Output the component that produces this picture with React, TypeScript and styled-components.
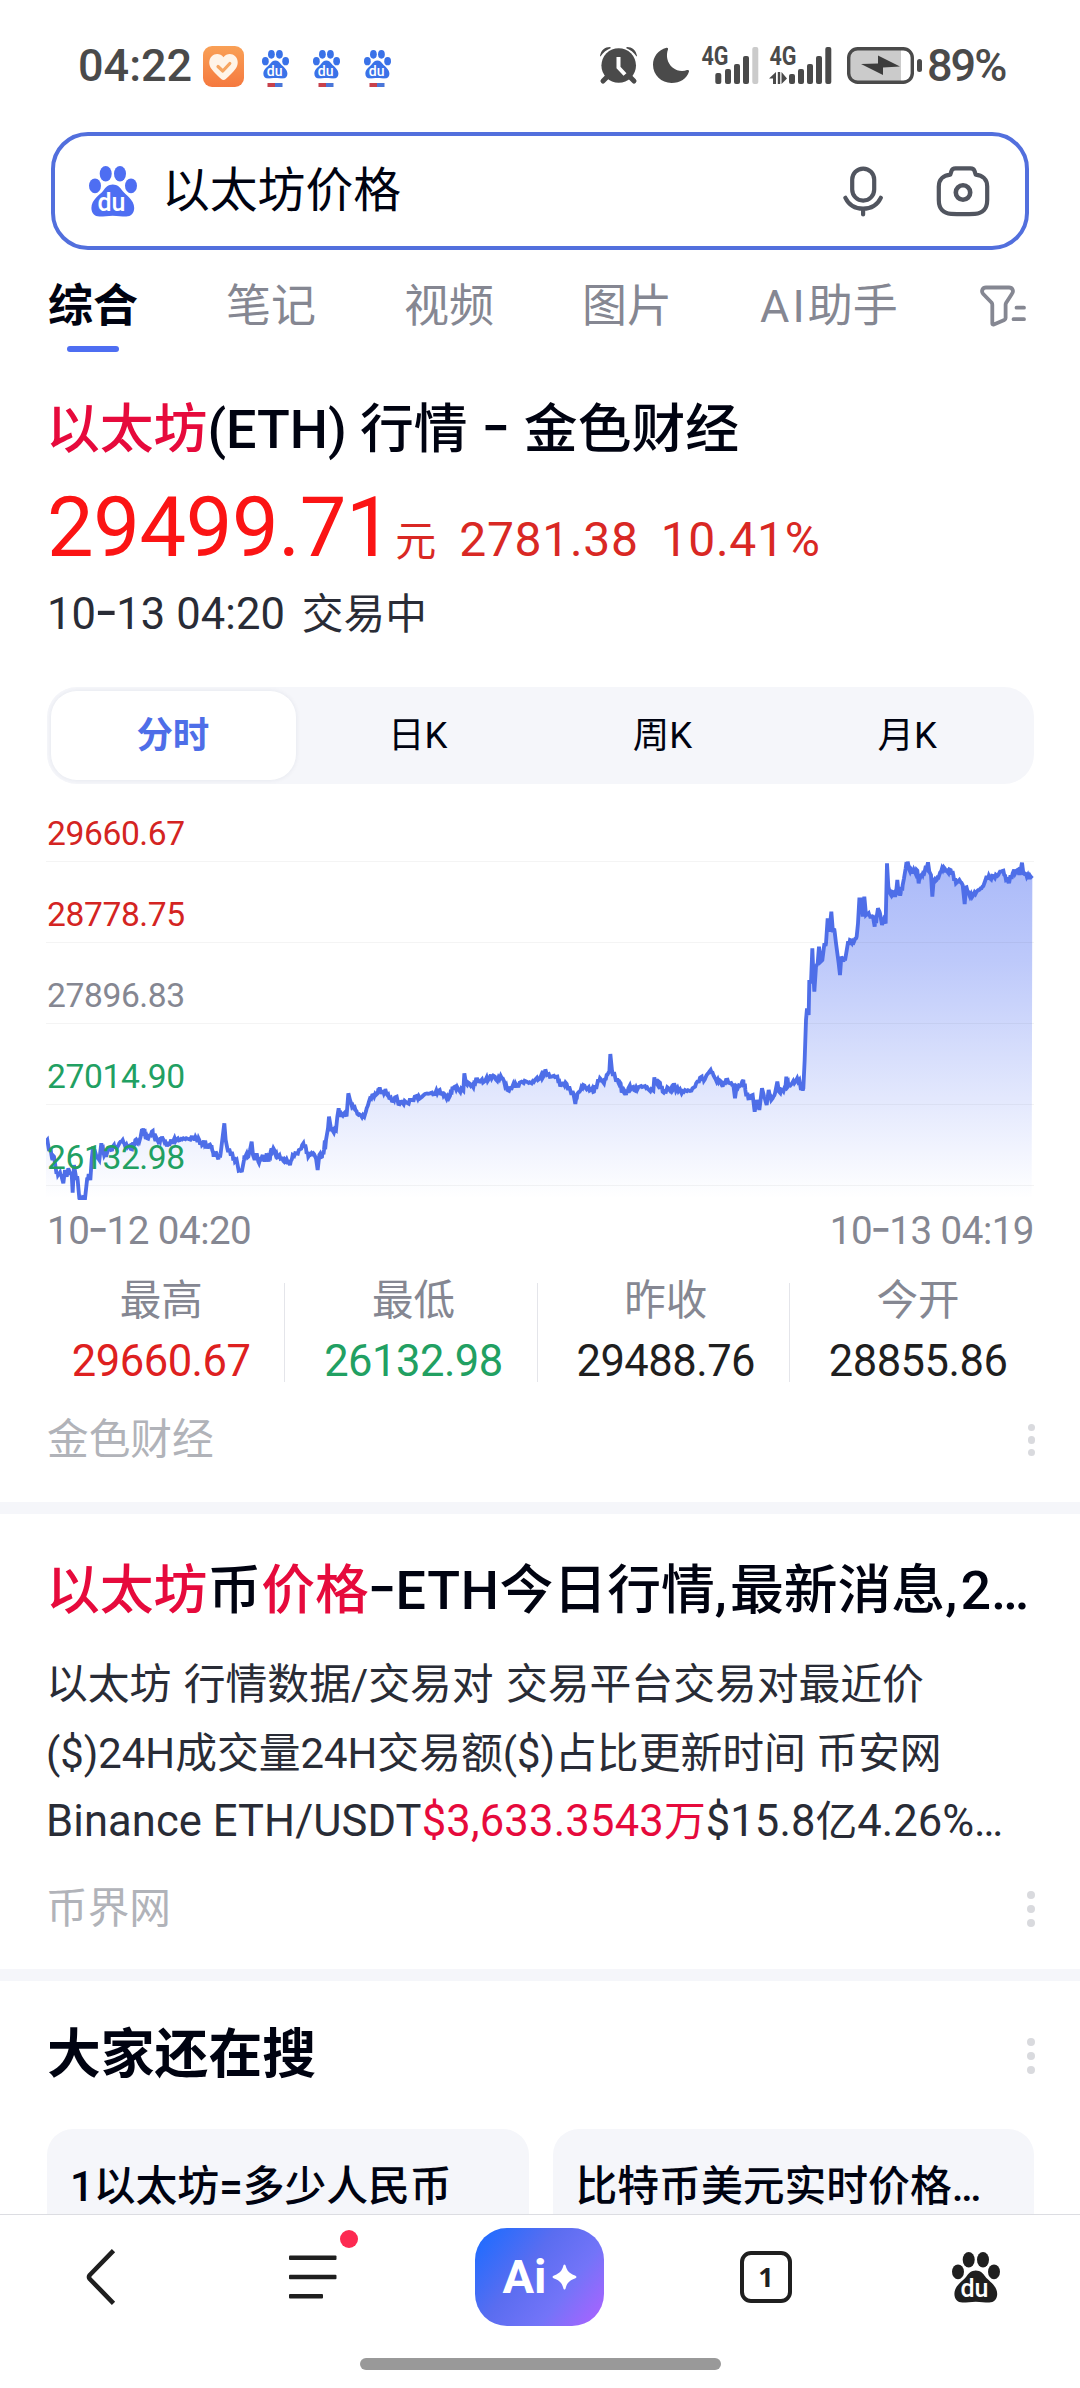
import React from "react";
import styled, { createGlobalStyle, css } from "styled-components";

const GlobalStyle = createGlobalStyle`
  * { box-sizing: border-box; }
  html, body { margin: 0; padding: 0; background: #fff; }
  body {
    font-family: Roboto, "Noto Sans CJK SC", sans-serif;
    color: #000311;
    -webkit-font-smoothing: antialiased;
  }
  svg { display: block; flex: none; }
`;

const Page = styled.div`
  width: 1080px;
  height: 2388px;
  display: flex;
  flex-direction: column;
  background: #fff;
  overflow: hidden;
`;

const Scroll = styled.main`
  flex: 1;
  min-height: 0;
  overflow: hidden;
`;

/* ---------- shared text ---------- */

const Dash = styled.span<{ $gap?: number }>`
  font-family: Inter, sans-serif;
  font-size: 1.2em;
  line-height: 0;
  font-weight: 400;
  margin: 0 calc(-0.038em + ${(p) => p.$gap ?? 0}px);
`;

const Latin = styled.span<{ $track?: number; $size?: number }>`
  letter-spacing: ${(p) => p.$track ?? 0}px;
  ${(p) => p.$size && css`font-size: ${p.$size}px;`}
`;

const Hit = styled.em`
  font-style: normal;
  color: #e60a3c;
`;

/* ---------- status bar ---------- */

const StatusBar = styled.header`
  height: 132px;
  padding: 0 75px 0 78px;
  display: flex;
  align-items: center;
  justify-content: space-between;
  color: #4a4a4a;
`;

const StatusGroup = styled.div`
  display: flex;
  align-items: center;
`;

const Clock = styled.span`
  width: 125px;
  font-size: 45px;
  line-height: 60px;
  font-weight: 500;
`;

const PawRow = styled.div`
  display: flex;
  gap: 24px;
  margin-left: 18px;
  padding-top: 5px;
`;

const Percent = styled.span`
  width: 78px;
  font-size: 45px;
  line-height: 60px;
  font-weight: 500;
  letter-spacing: -2px;
  white-space: nowrap;
`;

/* ---------- search ---------- */

const SearchBox = styled.div`
  height: 118px;
  margin: 0 51px;
  padding: 0 35px 0 34px;
  border: 4px solid #526fdd;
  border-radius: 37px;
  display: flex;
  align-items: center;
`;

const Query = styled.span`
  flex: 1;
  margin-left: 25px;
  font-size: 47.8px;
  line-height: 60px;
`;

const SearchTools = styled.div`
  display: flex;
  align-items: center;
  gap: 53px;
`;

const Tabs = styled.nav`
  height: 118px;
  padding: 0 51px 0 48px;
  display: flex;
  align-items: flex-start;
  gap: 88px;
`;

const Tab = styled.span<{ $active?: boolean }>`
  display: flex;
  flex-direction: column;
  align-items: center;
  padding-top: 29px;
  font-size: 45px;
  line-height: 56px;
  white-space: nowrap;
  color: ${(p) => (p.$active ? "#000311" : "#858792")};
  font-weight: ${(p) => (p.$active ? 700 : 400)};
  &::after {
    content: "";
    width: 52px;
    height: 6px;
    margin-top: 11px;
    border-radius: 3px;
    background: ${(p) => (p.$active ? "#4e6ef2" : "transparent")};
  }
`;

const FilterSlot = styled.div`
  margin-left: -6px;
  padding-top: 35px;
`;

/* ---------- market card ---------- */

const Market = styled.section`
  height: 1134px;
  padding: 0 46px 0 47px;
`;

const Title = styled.h2<{ $height: number; $bold?: boolean }>`
  margin: 0;
  height: ${(p) => p.$height}px;
  font-size: 53.8px;
  line-height: 76px;
  font-weight: ${(p) => (p.$bold ? 600 : 500)};
  white-space: nowrap;
`;

const MarketTitle = styled(Title)`
  padding-top: 24px;
  margin-left: -1px;
`;

const PriceLine = styled.div`
  height: 110px;
  padding-top: 3px;
  display: flex;
  align-items: baseline;
  color: #d92824;
  font-size: 48px;
  line-height: 100px;
`;

const Price = styled.span`
  color: #fb1414;
  font-size: 83px;
  letter-spacing: -0.4px;
`;

const Unit = styled.span`
  font-size: 41px;
  margin: 0 23px 0 3px;
`;

const Change = styled.span`
  margin-right: 22px;
  letter-spacing: 0.7px;
`;

const Stamp = styled.div`
  height: 102px;
  font-size: 41.7px;
  line-height: 60px;
  color: #292c36;
  white-space: pre;
`;

const StampTime = styled(Latin)`
  margin-right: -4px;
`;

const Segments = styled.div`
  height: 97px;
  padding: 4px;
  border-radius: 30px;
  background: #f5f6fa;
  display: grid;
  grid-template-columns: repeat(4, 1fr);
`;

const Segment = styled.div<{ $active?: boolean }>`
  display: flex;
  align-items: center;
  justify-content: center;
  padding: 0 1px 7px 0;
  font-size: 36.5px;
  border-radius: 26px;
  ${(p) =>
    p.$active &&
    css`
      background: #fff;
      color: #4e6ee8;
      font-weight: 700;
      box-shadow: 0 0 5px rgba(30, 40, 80, 0.08);
    `}
`;

const ChartStack = styled.div`
  height: 416px;
  margin-left: -1px;
  display: grid;
  > * { grid-area: 1 / 1; }
`;

const ChartSvg = styled.svg`
  margin-top: 16px;
`;

const Scale = styled.div`
  display: flex;
  flex-direction: column;
  padding-top: 15px;
`;

const ScaleRow = styled.div<{ $tone: string }>`
  height: 81px;
  &:first-child { height: 63px; }
  display: flex;
  align-items: flex-end;
  padding: 0 0 7px 1px;
  border-bottom: 1px solid rgba(30, 30, 40, 0.05);
  font-size: 33.6px;
  line-height: 40px;
  letter-spacing: -0.4px;
  color: ${(p) => p.$tone};
`;

const Times = styled.div`
  height: 83px;
  padding-top: 10px;
  display: flex;
  justify-content: space-between;
  font-size: 38.5px;
  line-height: 42px;
  letter-spacing: -0.5px;
  color: #858792;
`;

const Stats = styled.div`
  height: 99px;
  margin: 0 -10px 0 -14px;
  display: grid;
  grid-template-columns: repeat(4, 252.3px);
`;

const Stat = styled.div<{ $tone?: string }>`
  display: flex;
  flex-direction: column;
  align-items: center;
  padding-left: 5px;
  border-right: 1px solid #e4e5ea;
  font-size: 43.5px;
  line-height: 44px;
  letter-spacing: -0.5px;
  color: ${(p) => p.$tone ?? "#1f1f1f"};
  &:last-child { border-right-color: transparent; }
`;

const StatName = styled.span`
  font-size: 41.5px;
  line-height: 36px;
  margin-bottom: 21px;
  letter-spacing: 0;
  color: #858792;
`;

const StatValue = styled.span`
  height: 42px;
`;

const Source = styled.div<{ $top: number }>`
  margin-top: ${(p) => p.$top}px;
  height: 60px;
  display: flex;
  align-items: center;
  justify-content: space-between;
  font-size: 41.7px;
  line-height: 60px;
  color: #b1b3b9;
`;

const Dots = styled.span<{ $size: number; $gap: number }>`
  display: flex;
  flex-direction: column;
  gap: ${(p) => p.$gap}px;
  margin-right: -1px;
  i {
    width: ${(p) => p.$size}px;
    height: ${(p) => p.$size}px;
    border-radius: 50%;
    background: #d9dade;
  }
`;

const Band = styled.div`
  height: 12px;
  background: #f5f6fa;
`;

/* ---------- second result ---------- */

const Result = styled.section`
  height: 455px;
  padding: 39px 46px 0 46px;
`;

const Abstract = styled.p`
  margin: 22px 0 0;
  font-size: 41.8px;
  line-height: 68.7px;
  color: #292c36;
  white-space: nowrap;
`;

const Line = styled.span<{ $space?: number }>`
  display: block;
  height: 68.7px;
  word-spacing: ${(p) => p.$space ?? 0}px;
`;

/* ---------- related searches ---------- */

const Related = styled.section`
  padding: 36px 46px 0 47px;
`;

const RelatedHead = styled.div`
  height: 112px;
  display: flex;
  justify-content: space-between;
`;

const DotsSlot = styled.div`
  padding-top: 21px;
`;

const Cards = styled.div`
  display: grid;
  grid-template-columns: 1fr 1fr;
  gap: 24px;
`;

const Card = styled.div`
  height: 130px;
  padding: 28px 24px 0 23px;
  border-radius: 26px;
  background: #f5f6fa;
  font-size: 41.8px;
  line-height: 60px;
  font-weight: 500;
  white-space: nowrap;
`;

/* ---------- bottom bar ---------- */

const BottomBar = styled.footer`
  height: 174px;
  border-top: 1px solid #dcdde2;
  display: flex;
  flex-direction: column;
  align-items: center;
`;

const NavRow = styled.div`
  height: 143px;
  width: 100%;
  padding-bottom: 19px;
  display: grid;
  grid-template-columns: 202px 222px 231px 222px 197px;
  align-items: center;
  justify-items: center;
`;

const MenuButton = styled.div`
  position: relative;
`;

const Badge = styled.i`
  position: absolute;
  left: 51px;
  top: -25px;
  width: 18px;
  height: 18px;
  border-radius: 50%;
  background: #fd2a51;
`;

const AiButton = styled.div`
  width: 129px;
  height: 98px;
  border-radius: 32px;
  background: linear-gradient(128deg, #1f6cff 5%, #5a6df0 40%, #7374f8 68%, #a863ff 96%);
  display: flex;
  align-items: center;
  justify-content: center;
  gap: 5px;
  color: #fff;
  font-size: 47px;
  line-height: 60px;
  font-weight: 700;
`;

const TabCount = styled.div`
  width: 52px;
  height: 52px;
  border: 4.5px solid #1f1f1f;
  border-radius: 11px;
  display: flex;
  align-items: center;
  justify-content: center;
  font-family: "Noto Sans", sans-serif;
  font-size: 27px;
  font-weight: 700;
  line-height: 40px;
  color: #1f1f1f;
`;

const HomeBar = styled.div`
  width: 361px;
  height: 12px;
  border-radius: 6px;
  background: #999;
`;

/* ---------- icons ---------- */

function Paw({ color, width = 48 }: { color: string; width?: number }) {
  return (
    <svg width={width} height={(width * 51) / 48} viewBox="0 0 48 51" fill={color}>
      <ellipse cx="16.7" cy="7.7" rx="6" ry="7.7" />
      <ellipse cx="31" cy="7.7" rx="6" ry="7.7" />
      <ellipse cx="6" cy="19.8" rx="6" ry="7.4" />
      <ellipse cx="42" cy="19.8" rx="6" ry="7.4" />
      <path d="M23.8 18.5c4.6 0 7.2 2.8 9.6 6.2 3 4.2 11.8 8.6 11.8 17.4 0 5.200-3.400 8.500-8 8.500-5 0-8-.9-13.400-.9s-8.400.9-13.400.9c-4.600 0-8-3.300-8-8.500 0-8.800 8.400-13 11.800-17.400 2.400-3.400 5-6.200 9.600-6.200z" />
      <text x="22.500" y="45.400" textAnchor="middle" fontFamily="Roboto, sans-serif" fontWeight="500" fontSize="25" fill="#fff">
        du
      </text>
    </svg>
  );
}

function StatusPaw() {
  return (
    <svg width="27" height="37" viewBox="0 0 27 37">
      <Paw color="#3a72e8" width={27} />
      <rect x="5.500" y="33" width="7.500" height="4" fill="#c8414b" />
      <rect x="13" y="33" width="7.500" height="4" fill="#4a76d8" />
    </svg>
  );
}

const HeartIcon = () => (
  <svg width="41" height="41" viewBox="0 0 41 41">
    <defs>
      <linearGradient id="heartBg" x1="0" y1="0" x2="0" y2="1">
        <stop offset="0" stopColor="#f9a056" />
        <stop offset="1" stopColor="#f5793f" />
      </linearGradient>
    </defs>
    <rect width="41" height="41" rx="9" fill="url(#heartBg)" />
    <path d="M20.500 11.200C17.500 7.200 12 7 8.800 10.200c-3.300 3.400-3.400 8.600-.2 12.800 2.700 3.500 6.400 7.400 9.600 10.100 1.600 1.300 3 1.300 4.600 0 3.200-2.700 6.900-6.600 9.600-10.100 3.200-4.200 3.100-9.400-.2-12.800C29 7 23.500 7.200 20.500 11.200z" fill="#fff4e8" />
    <path d="M15 20.500l4.800 4.500 7-7.500" fill="none" stroke="#f6a561" strokeWidth="3.200" strokeLinecap="round" strokeLinejoin="round" />
  </svg>
);

const StatusIcons = () => (
  <svg width="328" height="60" viewBox="600 35 328 60" fill="#4a4a4a">
    <path d="M604 80l6-6M635 80l-6-6" stroke="#4a4a4a" strokeWidth="5" strokeLinecap="round" />
    <path d="M601 55c1-6 5-9 10-9l1 1c-4 1.500-8 4.500-10.500 8.500zM638 55c-1-6-5-9-10-9l-1 1c4 1.500 8 4.500 10.500 8.500z" />
    <circle cx="619.700" cy="64.500" r="17.300" />
    <path d="M619.500 56v10.500l6.500 7" fill="none" stroke="#fff" strokeWidth="4" />
    <path d="M667.500 46.800c-8.400 2.200-13.500 9-13.500 17C654 74 662.500 82 672.500 82c8.500 0 15.500-4.500 17.500-11.500.2-1.200-.8-1.900-2-1.400-4 1.600-10 1.300-14.500-2.600-5.300-4.600-6.800-11.800-4.500-18 .4-1.200-.4-2-1.500-1.700z" />
    <text x="702.500" y="64" fontFamily="Roboto, sans-serif" fontSize="25" fontWeight="700" textLength="27" lengthAdjust="spacingAndGlyphs">4G</text>
    <rect x="716.300" y="72" width="6" height="11" rx="2" />
    <rect x="726" y="68" width="6" height="15" rx="2" />
    <rect x="735" y="63" width="6" height="20" rx="2" />
    <rect x="744" y="55" width="6" height="28" rx="2" />
    <rect x="753.300" y="46" width="6" height="37" rx="2" fill="#cbcbcb" />
    <text x="770.500" y="64" fontFamily="Roboto, sans-serif" fontSize="25" fontWeight="700" textLength="27" lengthAdjust="spacingAndGlyphs">4G</text>
    <path d="M777 71v12h-3v-5.500H770l7-6.500zM778.800 71h2.400v12h-2.400zM782.500 71l5.500 6.500-5.500 5.500z" />
    <rect x="790" y="73" width="6" height="10" rx="2" />
    <rect x="799" y="68" width="6" height="15" rx="2" />
    <rect x="808" y="63" width="6" height="20" rx="2" />
    <rect x="817" y="55" width="6" height="28" rx="2" />
    <rect x="826.300" y="46" width="6" height="37" rx="2" />
    <path d="M858 48.500h44v32h-44a7 7 0 0 1-7-7v-18a7 7 0 0 1 7-7z" fill="#cbcbcb" />
    <rect x="849.700" y="47.700" width="63.600" height="33.600" rx="9" fill="none" stroke="#4a4a4a" strokeWidth="3.400" />
    <path d="M879 54.500L901 65.500l-17 1v7.500l-22-11 17-.5z" fill="#3c3c3c" />
    <rect x="918" y="58" width="5" height="13" rx="2.500" />
  </svg>
);

const MicIcon = () => (
  <svg width="40" height="51" viewBox="0 0 40 51" fill="none" stroke="#51555f" strokeWidth="4.200" strokeLinecap="round">
    <rect x="9.200" y="2.600" width="22" height="32" rx="11" />
    <path d="M2.400 31.800c3.400 7 10 10.900 17.700 10.900s14.300-3.900 17.700-10.900M20.100 43v5.500" />
  </svg>
);

const CameraIcon = () => (
  <svg width="54" height="51" viewBox="0 0 54 51" fill="none" stroke="#51555f" strokeWidth="4.200" strokeLinejoin="round">
    <path d="M19.500 2.300h15c2 0 3.400.8 4 2.600l1.200 3.800c6.500.6 11.500 4.600 11.500 11.800v13.500C51.200 43 46.500 47.500 39 47.800c-8 .4-16 .4-24 0C7.500 47.500 2.800 43 2.800 34V20.500c0-7.200 5-11.200 11.500-11.800l1.200-3.800c.6-1.800 2-2.600 4-2.600z" />
    <circle cx="27" cy="26.500" r="7.200" strokeWidth="4.600" />
  </svg>
);

const FilterIcon = () => (
  <svg width="46" height="42" viewBox="0 0 46 42" fill="none" stroke="#858792" strokeWidth="3.800" strokeLinecap="round" strokeLinejoin="round">
    <path d="M6 2.500h23c3.500 0 5 3.500 3 6.200l-5.800 9c-.4.700-.6 1.300-.6 2V33c0 1-.4 1.600-1.300 2l-10.500 4.500c-.9.300-1.500-.1-1.500-1V19.700c0-.7-.2-1.300-.6-2L3 8.700C1 6 2.500 2.500 6 2.500z" />
    <path d="M36.500 22.700h7.500M33.500 34.200H44" />
  </svg>
);

const BackIcon = () => (
  <svg width="30" height="56" viewBox="0 0 30 56" fill="none" stroke="#1f1f1f" strokeWidth="4.600" strokeLinejoin="round">
    <path d="M27.500 1.700L3.800 26q-1.600 2 0 4L27.500 54.300" />
  </svg>
);

const MenuIcon = () => (
  <svg width="48" height="44" viewBox="0 0 48 44" fill="#1f1f1f">
    <rect y="0.500" width="47.500" height="4.600" rx="1" />
    <rect y="19.700" width="47.500" height="4.600" rx="1" />
    <rect y="38.900" width="34" height="4.600" rx="1" />
  </svg>
);

const Spark = () => (
  <svg width="25" height="26" viewBox="0 0 25 26" fill="#fff">
    <path d="M12.500.5c.8 0 1 .8 1.300 1.800 1.400 4.700 3.500 7 8.400 8.900 1.100.5 2.300.9 2.300 1.800s-1.200 1.300-2.300 1.800c-4.900 1.900-7 4.200-8.400 8.900-.3 1-.5 1.800-1.300 1.800s-1-.8-1.300-1.800C9.800 19 7.700 16.700 2.800 14.800 1.700 14.300.5 13.900.5 13s1.200-1.300 2.300-1.800c4.900-1.900 7-4.200 8.400-8.900C11.500 1.300 11.700.5 12.500.5z" />
  </svg>
);

/* ---------- intraday series ---------- */

const NIGHT =
  "48,1025 52,1020 56,1045 62,1050 66,1075 72,1070 78,1110 84,1125 90,1118 96,1135 100,1150 105,1110 110,1130 115,1105 120,1120 125,1120 128,1178 132,1095 137,1125 143,1140 148,1195 165,1196 170,1150 176,1122 181,1140 185,1080 189,1040 195,1065 202,1070 208,1080 214,1030 220,1055 228,1070 236,1040 244,1050 252,1035 260,1045 268,1030 278,1020 286,1040 296,1038 306,1048 316,1020 322,1030 332,1010 340,985 346,1010 352,1015 360,1005 368,993 374,1015 382,1020 390,1025 396,1010 404,1028 412,1035 420,1030 430,1022 440,1018 450,1020 460,1015 475,1017 490,1012 500,1018 508,1020 516,1035 522,1022 530,1045 538,1035 545,1040 551,1070 557,1055 565,1078 572,1060 578,1010 583,970 587,1020 592,1045 600,1055 608,1065 615,1085 620,1080 626,1112 636,1112 642,1080 648,1065 655,1070 660,1050 665,1025 669,1065 674,1080 680,1060 685,1085 692,1080 698,1065 704,1085 710,1060 716,1085 722,1055 730,1045 737,1065 745,1070 755,1075 762,1085 770,1078 780,1095 788,1065 800,1060 810,1048 820,1030 828,1045 835,1070 842,1062 850,1060 858,1075 863,1110 868,1065 876,1070 882,1050 888,1020 894,985 897,950 902,980 908,992 918,990 922,950 926,925 932,950 942,940 950,945 955,880 960,900 966,920 974,922 982,942 992,945 1003,950 1010,925 1020,895 1030,885 1038,885 1043,880 1049,862 1055,882 1065,872 1072,885 1080,895 1088,903 1095,892 1100,890 1105,912 1115,905 1130,908 1145,900 1160,888 1170,895 1185,882";
const DAY =
  "90,880 105,882 116,872 125,882 133,882 140,897 150,888 157,865 165,860 175,868 190,872 193,820 198,850 208,850 220,862 228,838 240,845 255,843 268,835 280,827 292,843 302,828 312,843 322,870 335,865 340,852 350,858 365,845 380,845 395,850 405,840 420,835 430,830 436,808 441,825 455,830 472,830 480,855 490,850 500,852 512,875 520,880 526,912 532,882 542,870 550,855 560,868 575,868 582,875 592,850 600,835 612,850 620,825 628,815 631,762 636,812 645,830 655,848 662,850 665,878 672,870 678,885 685,865 697,862 705,872 715,862 735,858 745,868 760,872 763,832 770,850 780,848 788,875 798,875 802,862 810,872 820,868 822,850 828,872 840,868 845,880 855,870 870,873 882,862 892,845 905,830 912,842 920,825 932,810 940,825 950,845 960,842 968,860 978,840 990,850 1000,855 1005,895 1010,860 1020,858 1030,840 1036,870 1045,895 1058,885 1064,935 1070,900 1078,930 1086,865 1092,890 1100,915 1106,870 1114,900";
const SURGE =
  "38,895 45,880 52,845 57,875 68,870 76,865 79,830 85,858 95,852 108,842 118,840 123,870 130,865 134,780 138,660 141,625 146,645 148,540 153,550 157,445 160,520 163,575 168,500 173,490 177,440 182,485 187,480 192,440 198,430 203,355 208,395 214,335 218,385 224,395 228,430 232,460 236,490 240,525 244,470 250,485 257,470 262,440 270,420 276,430 284,420 290,410 294,370 298,298 303,298 308,350 313,290 318,345 326,340 332,355 338,345 344,380 350,350 354,325 360,340 366,375 372,360 377,370 381,190 385,260 390,280 396,275 402,290 408,280 412,240 416,285 422,280 428,255 432,235 437,205 443,185 448,210 456,212 464,215 472,212 476,250 482,222 488,225 494,215 504,187 508,215 513,225 517,290 521,242 530,240 538,225 546,205 554,205 562,215 572,210 580,225 588,250 598,240 608,255 614,312 618,262 624,275 630,290 640,285 650,275 662,265 670,258 680,228 690,235 700,228 712,228 720,215 730,212 738,240 748,245 758,220 770,212 780,220 786,188 790,220 798,222 806,232 812,230 817,235";

const parse = (src: string, shift: number) =>
  src.split(" ").map((pair) => {
    const [x, y] = pair.split(",").map(Number);
    return [x + shift, y] as [number, number];
  });

// The three sessions share one axis; in-between ticks add the fine market noise.
function buildSeries() {
  const base = [...parse(NIGHT, -48), ...parse(DAY, 1062), ...parse(SURGE, 2142)];
  const out: [number, number][] = [];
  base.forEach(([x, y], i) => {
    out.push([x, y]);
    const next = base[i + 1];
    if (!next || Math.abs(next[1] - y) > 30 || next[0] - x < 6) return;
    const mx = (x + next[0]) / 2;
    const my = (y + next[1]) / 2;
    const wobble = Math.sin(i * 12.9898) * 7;
    out.push([mx - 1.5, my + wobble], [mx + 1.5, my - wobble * 0.6]);
  });
  return out.map(([x, y]) => `${x.toFixed(1)},${y.toFixed(1)}`).join(" ");
}

const SERIES = buildSeries();

const PriceChart = () => (
  <ChartSvg width="988" height="400" viewBox="0 0 2964 1200">
    <defs>
      <linearGradient id="area" gradientUnits="userSpaceOnUse" x1="0" y1="184" x2="0" y2="1195">
        <stop offset="0" stopColor="#4e6ef2" stopOpacity="0.48" />
        <stop offset="0.3" stopColor="#4e6ef2" stopOpacity="0.37" />
        <stop offset="0.72" stopColor="#4e6ef2" stopOpacity="0.15" />
        <stop offset="1" stopColor="#4e6ef2" stopOpacity="0" />
      </linearGradient>
    </defs>
    <polygon points={`0,1200 ${SERIES} 2957,1200`} fill="url(#area)" />
    <polyline points={SERIES} fill="none" stroke="#4e6ee8" strokeWidth="11.500" strokeLinejoin="miter" strokeMiterlimit="3" />
  </ChartSvg>
);

/* ---------- data ---------- */

const scale = [
  { value: "29660.67", tone: "#d42422" },
  { value: "28778.75", tone: "#d42422" },
  { value: "27896.83", tone: "#858792" },
  { value: "27014.90", tone: "#21a062" },
  { value: "26132.98", tone: "#21a062" },
];

const stats = [
  { name: "最高", value: "29660.67", tone: "#de2020" },
  { name: "最低", value: "26132.98", tone: "#21a062" },
  { name: "昨收", value: "29488.76" },
  { name: "今开", value: "28855.86" },
];

const More = ({ size = 8, gap = 6 }: { size?: number; gap?: number }) => (
  <Dots $size={size} $gap={gap}>
    <i />
    <i />
    <i />
  </Dots>
);

export default function App() {
  return (
    <>
      <GlobalStyle />
      <Page>
        <Scroll>
          <StatusBar>
            <StatusGroup>
              <Clock>04:22</Clock>
              <HeartIcon />
              <PawRow>
                <StatusPaw />
                <StatusPaw />
                <StatusPaw />
              </PawRow>
            </StatusGroup>
            <StatusGroup>
              <StatusIcons />
              <Percent>89%</Percent>
            </StatusGroup>
          </StatusBar>

          <SearchBox>
            <Paw color="#4e6ef2" />
            <Query>以太坊价格</Query>
            <SearchTools>
              <MicIcon />
              <CameraIcon />
            </SearchTools>
          </SearchBox>

          <Tabs>
            <Tab $active>综合</Tab>
            <Tab>笔记</Tab>
            <Tab>视频</Tab>
            <Tab>图片</Tab>
            <Tab>
              <span>
                <Latin $track={3}>AI</Latin>助手
              </span>
            </Tab>
            <FilterSlot>
              <FilterIcon />
            </FilterSlot>
          </Tabs>

          <Market>
            <MarketTitle $height={107}>
              <Hit>以太坊</Hit>
              <Latin $track={0}>(ETH)</Latin> 行情 <Dash $gap={2.3}>-</Dash> 金色财经
            </MarketTitle>
            <PriceLine>
              <Price>29499.71</Price>
              <Unit>元</Unit>
              <Change>2781.38</Change>
              <Change>10.41%</Change>
            </PriceLine>
            <Stamp>
              <StampTime $size={43.5} $track={0.1}>
                10<Dash>-</Dash>13 04:20
              </StampTime>
              {"  "}交易中
            </Stamp>
            <Segments>
              <Segment $active>分时</Segment>
              <Segment>日K</Segment>
              <Segment>周K</Segment>
              <Segment>月K</Segment>
            </Segments>
            <ChartStack>
              <PriceChart />
              <Scale>
                {scale.map((s) => (
                  <ScaleRow key={s.value} $tone={s.tone}>
                    {s.value}
                  </ScaleRow>
                ))}
              </Scale>
            </ChartStack>
            <Times>
              <span>
                10<Dash>-</Dash>12 04:20
              </span>
              <span>
                10<Dash>-</Dash>13 04:19
              </span>
            </Times>
            <Stats>
              {stats.map((s) => (
                <Stat key={s.name} $tone={s.tone}>
                  <StatName>{s.name}</StatName>
                  <StatValue>{s.value}</StatValue>
                </Stat>
              ))}
            </Stats>
            <Source $top={28}>
              金色财经
              <More size={7.5} gap={5} />
            </Source>
          </Market>

          <Band />

          <Result>
            <Title $height={76}>
              <Hit>以太坊</Hit>币<Hit>价格</Hit>
              <Dash $gap={1}>-</Dash>
              <Latin $track={0.7}>ETH</Latin>今日行情<Latin $track={3.2}>,</Latin>最新消息
              <Latin $track={3.2}>,</Latin>2…
            </Title>
            <Abstract>
              <Line $space={2}>以太坊 行情数据/交易对 交易平台交易对最近价</Line>
              <Line>($)24H成交量24H交易额($)占比更新时间 币安网</Line>
              <Line>
                <Latin $size={43.5} $track={0.1}>Binance ETH/USDT</Latin>
                <Hit>
                  <Latin $size={43.5} $track={0.2}>$3,633.3543</Latin>万
                </Hit>
                <Latin $size={43.5} $track={0.1}>$15.8</Latin>亿
                <Latin $size={43.5} $track={0}>4.26%…</Latin>
              </Line>
            </Abstract>
            <Source $top={22}>
              币界网
              <More />
            </Source>
          </Result>

          <Band />

          <Related>
            <RelatedHead>
              <Title $height={76} $bold>
                大家还在搜
              </Title>
              <DotsSlot>
                <More />
              </DotsSlot>
            </RelatedHead>
            <Cards>
              <Card>1以太坊=多少人民币</Card>
              <Card>比特币美元实时价格…</Card>
            </Cards>
          </Related>
        </Scroll>

        <BottomBar>
          <NavRow>
            <BackIcon />
            <MenuButton>
              <MenuIcon />
              <Badge />
            </MenuButton>
            <AiButton>
              <span>Ai</span>
              <Spark />
            </AiButton>
            <TabCount>1</TabCount>
            <Paw color="#1f1f1f" />
          </NavRow>
          <HomeBar />
        </BottomBar>
      </Page>
    </>
  );
}
